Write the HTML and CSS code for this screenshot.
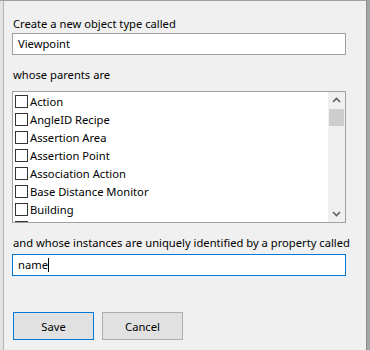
FILE: index.html
```html
<!DOCTYPE html>
<html lang="en">
<head>
    <meta charset="UTF-8">
    <title>New Object Type</title>
    <link rel="stylesheet" href="styles.css">
</head>
<body>
    <div class="window">
        <div class="edge-left"></div>

        <div class="dialog">
            <div class="label">Create a new object type called</div>
            <div class="textbox">Viewpoint</div>

            <div class="label gap">whose parents are</div>
            <div class="listbox">
                <div class="items">
                    <div class="item"><span class="check"></span>Action</div>
                    <div class="item"><span class="check"></span>AngleID Recipe</div>
                    <div class="item"><span class="check"></span>Assertion Area</div>
                    <div class="item"><span class="check"></span>Assertion Point</div>
                    <div class="item"><span class="check"></span>Association Action</div>
                    <div class="item"><span class="check"></span>Base Distance Monitor</div>
                    <div class="item"><span class="check"></span>Building</div>
                    <div class="item"><span class="check"></span></div>
                </div>
                <div class="scrollbar">
                    <svg class="arrow" width="17" height="17" viewBox="0 0 17 17">
                        <path d="M5 10 L8.5 6.5 L12 10" fill="none" stroke="#606060" stroke-width="1.6"/>
                    </svg>
                    <div class="thumb"></div>
                    <div class="track"></div>
                    <svg class="arrow" width="17" height="17" viewBox="0 0 17 17">
                        <path d="M5 7 L8.5 10.5 L12 7" fill="none" stroke="#606060" stroke-width="1.6"/>
                    </svg>
                </div>
            </div>

            <div class="label gap">and whose instances are uniquely identified by a property called</div>
            <div class="textbox focused">name<span class="caret"></span></div>

            <div class="buttons">
                <button class="btn default">Save</button>
                <button class="btn">Cancel</button>
            </div>
        </div>

        <div class="edge-right"></div>
    </div>
</body>
</html>
```

FILE: styles.css
```css
html, body {
    margin: 0;
    padding: 0;
    height: 100%;
}

body {
    background: #f0f0f0;
    font-family: "Noto Sans", "Open Sans", sans-serif;
    font-size: 11.2px;
    color: #000;
}

.window {
    display: flex;
    height: 350px;
    border-top: 1px solid #a0a0a0;
    box-sizing: border-box;
}

.edge-left {
    width: 3px;
    background: #e3e3e3;
    border-right: 1px solid #b4b4b4;
}

.edge-right {
    width: 3px;
    background: #a6a6a6;
    border-left: 1px solid #8c8c8c;
}

.dialog {
    flex: 1;
    min-width: 0;
    padding: 15px 20px 0 8px;
}

.label {
    height: 16px;
    line-height: 16px;
    padding-left: 1px;
    white-space: nowrap;
}

.label.gap {
    margin-top: 12px;
}

.textbox {
    margin-top: 1px;
    height: 22px;
    line-height: 20px;
    box-sizing: border-box;
    border: 1px solid #a0a0a0;
    background: #fff;
    padding-left: 5px;
}

.textbox.focused {
    margin-top: 3px;
    border-color: #0078d7;
}

.caret {
    display: inline-block;
    width: 1px;
    height: 14px;
    background: #000;
    vertical-align: -3px;
}

.listbox {
    margin-top: 8px;
    height: 132px;
    box-sizing: border-box;
    border: 1px solid #a0a0a0;
    background: #fff;
    display: flex;
    overflow: hidden;
}

.items {
    flex: 1;
    padding-left: 2px;
}

.item {
    height: 18px;
    display: flex;
    align-items: center;
    white-space: nowrap;
}

.check {
    width: 13px;
    height: 13px;
    box-sizing: border-box;
    border: 1px solid #333;
    background: #fff;
    margin-right: 2px;
    flex-shrink: 0;
}

.scrollbar {
    width: 17px;
    background: #f0f0f0;
    display: flex;
    flex-direction: column;
}

.arrow {
    display: block;
    flex-shrink: 0;
}

.thumb {
    height: 17px;
    margin: 0 1px;
    background: #cdcdcd;
}

.track {
    flex: 1;
}

.buttons {
    display: flex;
    gap: 8px;
    margin-top: 36px;
    padding-left: 1px;
}

.btn {
    width: 81px;
    height: 28px;
    font-family: inherit;
    font-size: 11.2px;
    background: #e1e1e1;
    border: 1px solid #adadad;
    padding: 0;
    color: #000;
}

.btn.default {
    border-color: #0078d7;
}
```
